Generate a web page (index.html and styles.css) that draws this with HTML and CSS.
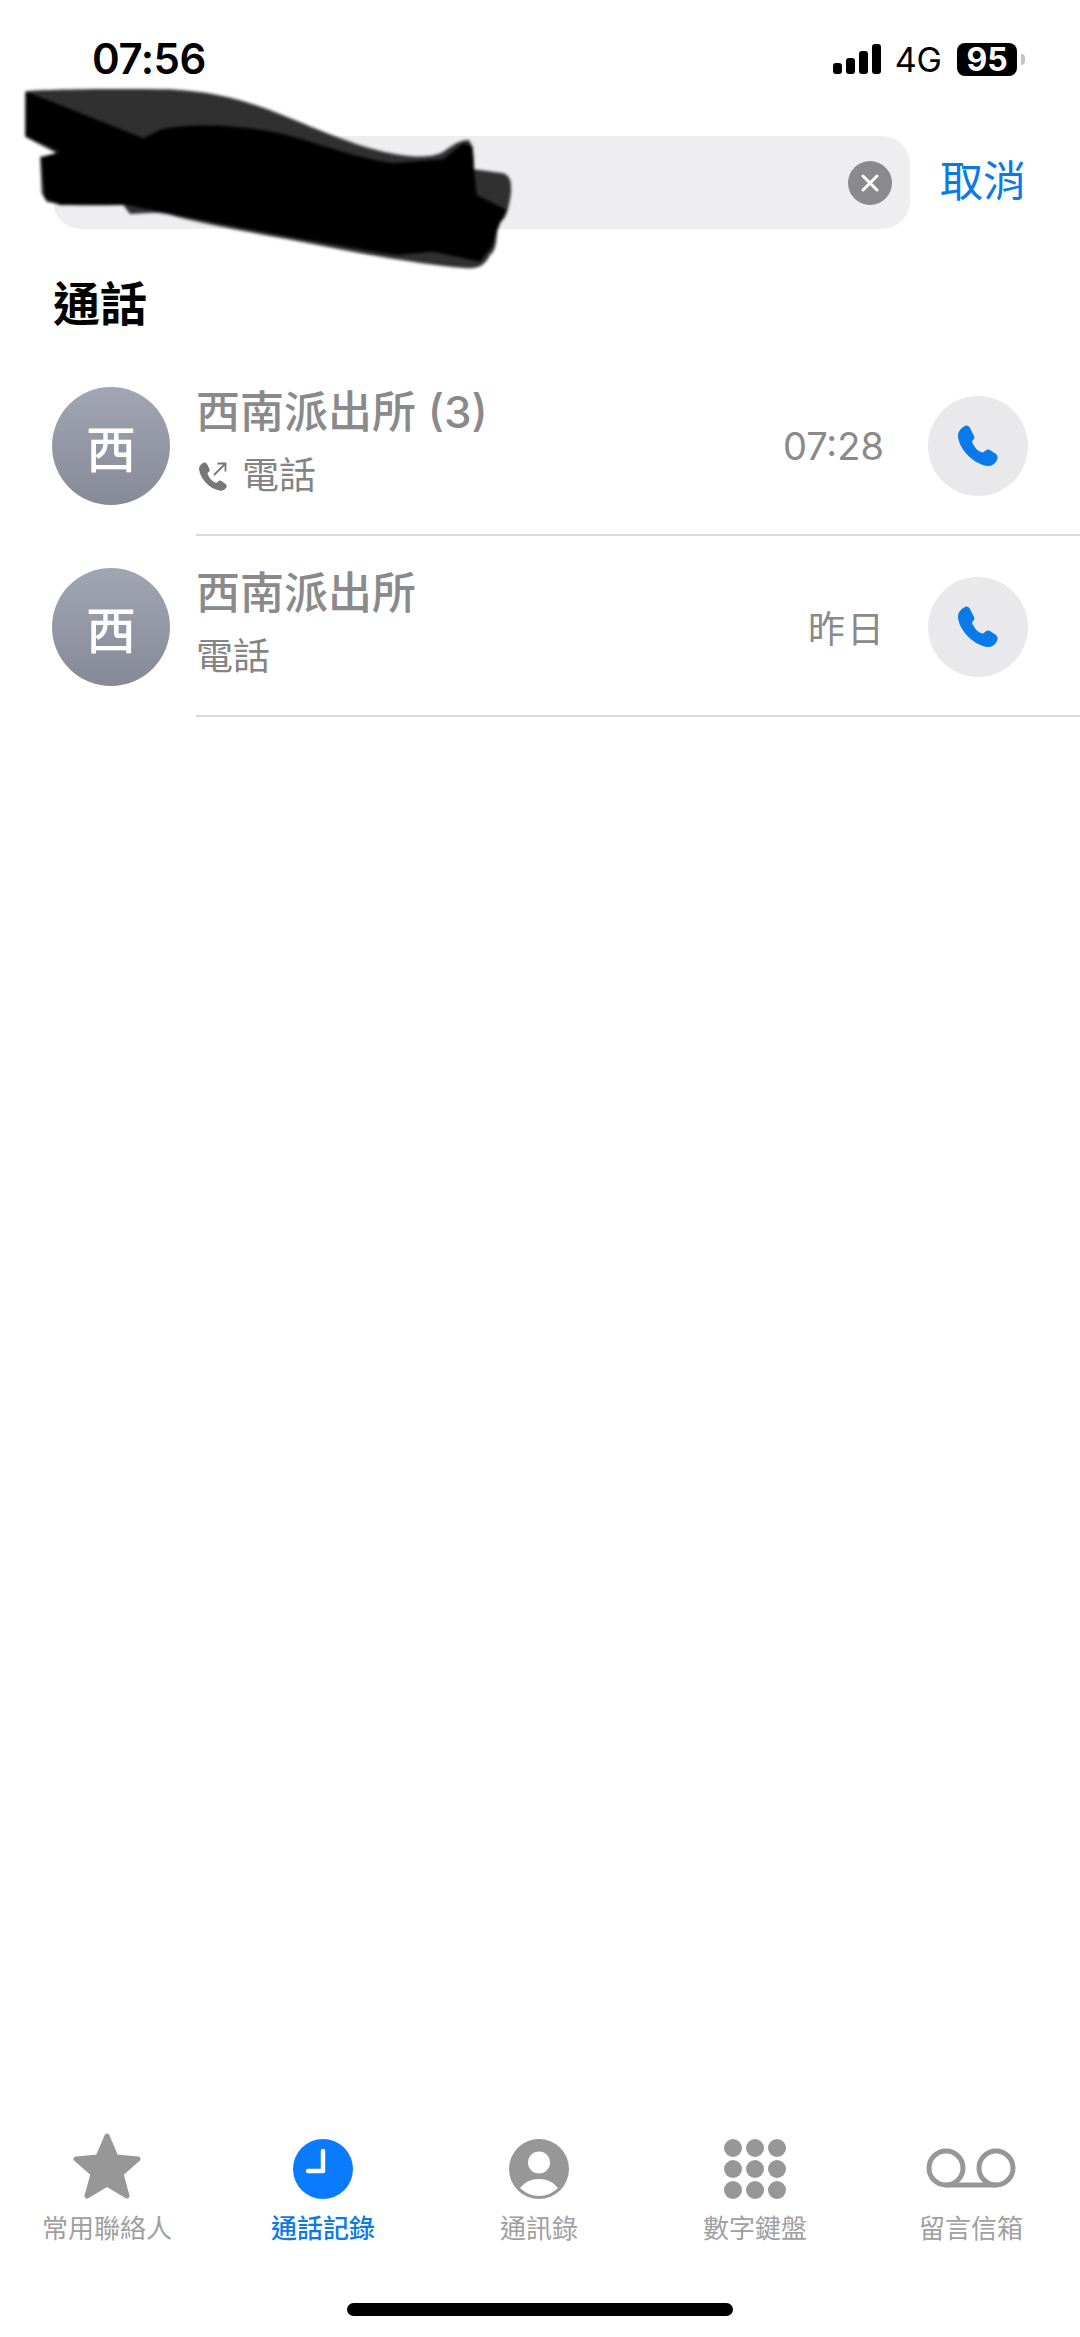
FILE: index.html
```html
<!DOCTYPE html>
<html lang="zh-Hant">
<head>
    <meta charset="utf-8">
    <link rel="stylesheet" href="styles.css">
</head>
<body>
    <div class="phone">
        <div class="status-bar">
            <div class="clock">07:56</div>
            <div class="status-right">
                <svg class="signal" width="48" height="30" viewBox="0 0 48 30">
                    <rect x="0" y="19" width="9" height="11" rx="3"/>
                    <rect x="13" y="14" width="9" height="16" rx="3"/>
                    <rect x="26" y="7" width="9" height="23" rx="3"/>
                    <rect x="39" y="0" width="9" height="30" rx="3"/>
                </svg>
                <div class="network">4G</div>
                <div class="battery">95</div>
                <div class="battery-cap"></div>
            </div>
        </div>

        <div class="search-row">
            <div class="search-box">
                <div class="clear-btn">
                    <svg width="20" height="20" viewBox="0 0 20 20">
                        <path d="M3 3 L17 17 M17 3 L3 17" stroke="#fff" stroke-width="3" stroke-linecap="round"/>
                    </svg>
                </div>
            </div>
            <div class="cancel">取消</div>
        </div>

        <!-- scribble over the search text -->
        <svg class="scribble" width="520" height="200" viewBox="0 0 1560 600">
            <path class="scribble-edge" d="M45 35 C60 28 300 25 480 28 C620 35 720 65 830 110 C930 150 1020 190 1100 210 C1180 232 1260 238 1300 215 C1330 195 1350 180 1375 180 C1390 190 1392 230 1392 268 L1480 280 C1500 290 1505 300 1503 340 C1495 390 1490 420 1462 432 C1460 480 1460 510 1440 525 C1425 555 1410 565 1370 565 C1250 555 1100 530 950 500 C800 470 640 445 500 410 C470 400 430 395 400 400 L360 402 L340 375 C280 375 170 380 110 365 L95 340 L90 230 L140 220 L45 170 Z"/>
            <path d="M50 35 L400 175 L450 150 C520 130 700 130 850 170 C950 200 1050 235 1150 250 L1300 238 L1360 190 L1388 200 L1392 270 L1400 345 L1490 390 L1470 430 L1445 500 L1410 545 L1270 515 L1160 525 C1000 500 700 445 500 405 L350 375 L150 375 L105 355 L95 235 L150 215 L48 168 Z"/>
        </svg>

        <h2 class="section-title">通話</h2>

        <div class="call-list">
            <div class="call-row">
                <div class="avatar">西</div>
                <div class="call-main">
                    <div class="call-name">西南派出所 <span class="count">(3)</span></div>
                    <div class="call-type">
                        <svg class="outgoing" width="30" height="30" viewBox="0 0 30 30">
                            <path d="M5 2 C7 1 8 2 9 3 L11.5 8 C12 9.5 11.5 10.5 10 11.5 C9.5 12 9.5 13 10 14 C12 18 14 20 17 21.5 C18 22 19 22 19.5 21 C20.5 19.5 22 19 23.5 20 L27.5 23 C29 24 29 25.5 28 27 C26 29.5 24 30 21.5 29.5 C12 28 2 18 1 8 C1 5 3 3 5 2 Z" fill="#777"/>
                            <path d="M16 14 L27 3 M19.5 2.5 L27.5 2.5 L27.5 10.5" fill="none" stroke="#777" stroke-width="1.8"/>
                        </svg>
                        <span>電話</span>
                    </div>
                </div>
                <div class="call-time">07:28</div>
                <div class="call-btn">
                    <svg width="42" height="42" viewBox="0 0 42 42">
                        <path d="M8 1 C10 0 12 1 13 3 L17 11 C18 13 17 14 15.5 15.5 C15 16 15 17 16 19 C18 23 21 26 24 27 C26 28 27 27 28 26 C29.5 24.5 31 24 33 25 L39 29 C41 31 41 33 40 35 C38 39 35 41 31 41 C18 40 2 25 1 11 C1 6 4 3 8 1 Z"/>
                    </svg>
                </div>
            </div>
            <div class="call-row">
                <div class="avatar">西</div>
                <div class="call-main">
                    <div class="call-name">西南派出所</div>
                    <div class="call-type"><span>電話</span></div>
                </div>
                <div class="call-time call-day">昨日</div>
                <div class="call-btn">
                    <svg width="42" height="42" viewBox="0 0 42 42">
                        <path d="M8 1 C10 0 12 1 13 3 L17 11 C18 13 17 14 15.5 15.5 C15 16 15 17 16 19 C18 23 21 26 24 27 C26 28 27 27 28 26 C29.5 24.5 31 24 33 25 L39 29 C41 31 41 33 40 35 C38 39 35 41 31 41 C18 40 2 25 1 11 C1 6 4 3 8 1 Z"/>
                    </svg>
                </div>
            </div>
        </div>

        <div class="tab-bar">
            <div class="tab">
                <svg width="68" height="66" viewBox="0 0 68 66">
                    <path d="M34 3 L43 24 L65 26 L48 41 L54 63 L34 51 L14 63 L20 41 L3 26 L25 24 Z" fill="#979797" stroke="#979797" stroke-width="5" stroke-linejoin="round"/>
                </svg>
                <span>常用聯絡人</span>
            </div>
            <div class="tab active">
                <svg width="68" height="66" viewBox="0 0 68 66">
                    <circle cx="34" cy="36" r="30" fill="#0a7aff"/>
                    <path d="M34 18 L34 38 L19 38" fill="none" stroke="#fff" stroke-width="4.5" stroke-linecap="round" stroke-linejoin="round"/>
                </svg>
                <span>通話記錄</span>
            </div>
            <div class="tab">
                <svg width="68" height="66" viewBox="0 0 68 66">
                    <circle cx="34" cy="36" r="30" fill="#979797"/>
                    <circle cx="34" cy="29.5" r="11" fill="#fff"/>
                    <path d="M15 55 C20 49 26 46 34 46 C42 46 48 49 53 55 C48 60 41 63 34 63 C27 63 20 60 15 55 Z" fill="#fff"/>
                </svg>
                <span>通訊錄</span>
            </div>
            <div class="tab">
                <svg width="68" height="66" viewBox="0 0 68 66">
                    <g fill="#979797">
                        <circle cx="12" cy="15" r="9"/><circle cx="34" cy="15" r="9"/><circle cx="56" cy="15" r="9"/>
                        <circle cx="12" cy="36" r="9"/><circle cx="34" cy="36" r="9"/><circle cx="56" cy="36" r="9"/>
                        <circle cx="12" cy="57" r="9"/><circle cx="34" cy="57" r="9"/><circle cx="56" cy="57" r="9"/>
                    </g>
                </svg>
                <span>數字鍵盤</span>
            </div>
            <div class="tab">
                <svg width="90" height="66" viewBox="0 0 90 66">
                    <g fill="none" stroke="#979797" stroke-width="5">
                        <circle cx="20" cy="35" r="17"/>
                        <circle cx="70" cy="35" r="17"/>
                        <path d="M20 52 L70 52"/>
                    </g>
                </svg>
                <span>留言信箱</span>
            </div>
        </div>

        <div class="home-bar"><div class="home-indicator"></div></div>
    </div>
</body>
</html>
```

FILE: styles.css
```css
* {
    box-sizing: border-box;
}
body {
    margin: 0;
    background-color: #fff;
    font-family: Inter, "Noto Sans CJK TC", sans-serif;
}
.phone {
    position: relative;
    width: 1080px;
    height: 2337px;
    display: flex;
    flex-direction: column;
    overflow: hidden;
}
.status-bar {
    height: 136px;
    padding: 37px 55px 0 92px;
    display: flex;
    justify-content: space-between;
    align-items: flex-start;
}
.clock {
    font-size: 42px;
    line-height: 44px;
    font-weight: 600;
    letter-spacing: -0.5px;
    color: #000;
}
.status-right {
    display: flex;
    align-items: center;
    height: 44px;
}
.signal {
    fill: #000;
}
.network {
    margin-left: 14px;
    font-size: 34px;
    color: #000;
}
.battery {
    margin-left: 15px;
    width: 60px;
    height: 33px;
    background-color: #000;
    border-radius: 8px;
    color: #fff;
    font-size: 32px;
    font-weight: 700;
    line-height: 33px;
    text-align: center;
}
.battery-cap {
    margin-left: 4px;
    width: 4px;
    height: 11px;
    background-color: #c4c4c4;
    border-radius: 0 4px 4px 0;
}
.search-row {
    height: 93px;
    padding: 0 54px 0 53px;
    display: flex;
    align-items: center;
}
.search-box {
    width: 857px;
    height: 93px;
    background-color: #eeeef0;
    border-radius: 28px;
    padding-right: 18px;
    display: flex;
    align-items: center;
    justify-content: flex-end;
}
.clear-btn {
    width: 44px;
    height: 44px;
    border-radius: 50%;
    background-color: #8a8a8e;
    display: flex;
    align-items: center;
    justify-content: center;
}
.cancel {
    margin-left: 30px;
    font-size: 43px;
    line-height: 44px;
    margin-top: -4px;
    color: #0a7ae6;
}
.scribble {
    position: absolute;
    left: 10px;
    top: 80px;
    fill: #000;
    filter: blur(1.5px);
}
.scribble-edge {
    fill: #303030;
}
.section-title {
    margin: 45px 0 0 53px;
    font-size: 47px;
    line-height: 60px;
    font-weight: 700;
    color: #000;
}
.call-list {
    margin-top: 21px;
}
.call-row {
    position: relative;
    height: 181px;
    padding: 0 52px;
    display: flex;
    align-items: center;
}
.call-row::after {
    content: "";
    position: absolute;
    left: 196px;
    right: 0;
    bottom: 0;
    height: 2px;
    background-color: #dadada;
}
.avatar {
    width: 118px;
    height: 118px;
    border-radius: 50%;
    background: linear-gradient(#a1a6b3, #858a96);
    color: #fff;
    font-size: 50px;
    font-weight: 500;
    display: flex;
    align-items: center;
    justify-content: center;
}
.call-main {
    flex: 1;
    margin-left: 26px;
    margin-bottom: 9px;
}
.call-name {
    font-size: 44px;
    line-height: 60px;
    font-weight: 500;
    color: #8a8a8a;
}
.count {
    font-weight: 500;
}
.call-type {
    margin-top: 10px;
    display: flex;
    align-items: center;
    font-size: 37px;
    line-height: 48px;
    color: #848484;
}
.outgoing {
    margin: 0 14px 0 2px;
}
.call-time {
    font-size: 38px;
    color: #8a8a8a;
}
.call-day {
    font-size: 37px;
    letter-spacing: 2px;
    margin-right: -2px;
}
.call-btn {
    margin-left: 44px;
    width: 100px;
    height: 100px;
    border-radius: 50%;
    background-color: #e9e9eb;
    fill: #0a7aea;
    display: flex;
    align-items: center;
    justify-content: center;
}
.tab-bar {
    margin-top: auto;
    margin-left: -1px;
    display: flex;
}
.tab {
    width: 216px;
    display: flex;
    flex-direction: column;
    align-items: center;
    font-size: 26px;
    line-height: 30px;
    color: #a0a0a0;
}
.tab span {
    margin-top: 15px;
}
.tab.active {
    color: #0a7ae6;
    font-weight: 500;
}
.home-bar {
    height: 93px;
    padding-top: 59px;
    display: flex;
    justify-content: center;
}
.home-indicator {
    width: 386px;
    height: 13px;
    border-radius: 7px;
    background-color: #000;
}
```
